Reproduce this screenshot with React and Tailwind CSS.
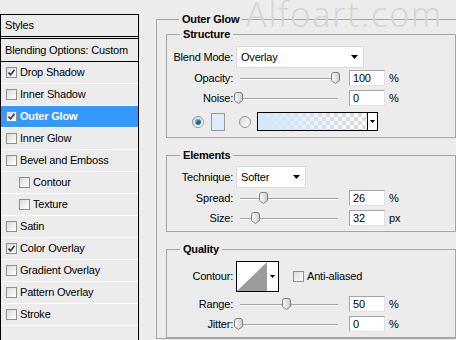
import React from "react";

const styles = [
  { label: "Drop Shadow", checked: true },
  { label: "Inner Shadow" },
  { label: "Outer Glow", checked: true, active: true },
  { label: "Inner Glow" },
  { label: "Bevel and Emboss" },
  { label: "Contour", indent: true },
  { label: "Texture", indent: true },
  { label: "Satin" },
  { label: "Color Overlay", checked: true },
  { label: "Gradient Overlay" },
  { label: "Pattern Overlay" },
  { label: "Stroke" },
];

function Checkbox({ checked }) {
  return (
    <span className="flex h-[11px] w-[11px] shrink-0 items-center justify-center border border-[#8e8f8f] bg-linear-to-br from-[#dcdcd7] to-white">
      {checked && (
        <svg width="7" height="7" viewBox="0 0 7 7">
          <path d="M0.5 3.5 L2.6 5.8 L6.5 0.8" fill="none" stroke="#2b3d73" strokeWidth="1.6" />
        </svg>
      )}
    </span>
  );
}

function Arrow() {
  return (
    <svg width="7" height="4" viewBox="0 0 7 4">
      <path d="M0 0 H7 L3.5 4 Z" fill="#000" />
    </svg>
  );
}

function Thumb() {
  return (
    <svg width="9" height="12" viewBox="0 0 9 12">
      <defs>
        <linearGradient id="tg" x1="0" y1="0" x2="1" y2="0">
          <stop offset="0" stopColor="#ffffff" />
          <stop offset="1" stopColor="#c9c9c9" />
        </linearGradient>
      </defs>
      <path d="M0.5 3 Q0.5 0.5 3 0.5 H6 Q8.5 0.5 8.5 3 V8.5 L4.5 11.5 L0.5 8.5 Z" fill="url(#tg)" stroke="#7d7d7d" />
    </svg>
  );
}

function Slider({ at }) {
  return (
    <div className="relative ml-[3px] h-full w-[113px]">
      <div className="absolute left-[4px] top-[8px] h-[2px] w-[98px] border-t border-[#a3a3a3] bg-white" />
      <div className="absolute top-[2px]" style={{ left: at - 236 - 7 }}>
        <Thumb />
      </div>
    </div>
  );
}

function NumberRow({ label, at, value, unit, className = "" }) {
  return (
    <div className={`flex h-[16px] items-center ${className}`}>
      <span className="w-[66px] text-right">{label}</span>
      <Slider at={at} />
      <div className="h-[16px] w-[36px] border border-t-[#a5a5a5] border-l-[#a5a5a5] border-r-[#e2e2e2] border-b-[#e2e2e2] bg-white pl-[3px] leading-[14px]">
        {value}
      </div>
      <span className="ml-[4px]">{unit}</span>
    </div>
  );
}

function Select({ value, width }) {
  return (
    <div className={`ml-[3px] flex h-[22px] items-center justify-between border border-[#dadada] bg-white pl-[4px] pr-[5px] ${width}`}>
      <span>{value}</span>
      <Arrow />
    </div>
  );
}

function Group({ title, className = "", children }) {
  return (
    <fieldset className={`w-[290px] border border-[#a6a6a6] ${className}`}>
      <legend className="ml-[13px] px-[3px] font-bold leading-[14px]">{title}</legend>
      {children}
    </fieldset>
  );
}

function Radio({ on }) {
  return (
    <span className="flex h-[12px] w-[12px] shrink-0 items-center justify-center rounded-full border border-[#8f9aa5] bg-linear-to-br from-[#d5d9de] to-white">
      {on && <span className="h-[6px] w-[6px] rounded-full bg-[#1a6a9c] shadow-[inset_1px_1px_1px_#7fc0e6]" />}
    </span>
  );
}

export default function App() {
  return (
    <div className="relative flex h-[340px] w-[456px] items-start overflow-hidden bg-[#ececec] font-['Liberation_Sans',Arial,sans-serif] text-[11px] tracking-[-0.2px] text-black">
      {/* Styles list */}
      <div className="mt-[14px] h-[340px] w-[139px] shrink-0 border border-black">
        <div className="flex h-[22px] items-center border-b border-black pl-[4px]">Styles</div>
        <div className="mt-[1px] flex h-[24px] items-center border-y border-black pl-[4px]">
          Blending Options: Custom
        </div>
        {styles.map((s) => (
          <div
            key={s.label}
            className={`flex h-[22px] items-center border-b border-white ${s.indent ? "pl-[18px]" : "pl-[5px]"} ${
              s.active ? "bg-[#3399ff] font-bold text-white" : ""
            }`}
          >
            <Checkbox checked={s.checked} />
            <span className="ml-[3px]">{s.label}</span>
          </div>
        ))}
      </div>

      {/* Outer Glow panel */}
      <fieldset className="ml-[17px] mt-[12px] w-[320px] shrink-0 border border-[#a6a6a6] pl-[9px]">
        <legend className="ml-[13px] px-[3px] font-bold leading-[14px]">Outer Glow</legend>

        <Group title="Structure" className="mt-[1px] pb-[6px]">
          <div className="flex flex-col pt-[5px]">
            <div className="flex h-[22px] items-center">
              <span className="w-[66px] text-right">Blend Mode:</span>
              <Select value="Overlay" width="w-[128px]" />
            </div>
            <NumberRow label="Opacity:" at={338} value="100" unit="%" className="mt-[2px]" />
            <NumberRow label="Noise:" at={241} value="0" unit="%" className="mt-[4px]" />
            <div className="mt-[6px] flex h-[19px] items-center pl-[25px]">
              <Radio on />
              <span className="ml-[7px] h-[18px] w-[14px] border border-[#9a9a9a] bg-[#dcecfb]" />
              <span className="ml-[14px]">
                <Radio />
              </span>
              <div className="ml-[6px] flex h-[19px] w-[121px] border border-black">
                <div className="flex-1 bg-[image:repeating-conic-gradient(#dadada_0%_25%,#ffffff_0%_50%)] bg-[length:8px_8px]">
                  <div className="h-full w-full bg-linear-to-r from-[#d4e8fb] to-transparent" />
                </div>
                <div className="flex w-[10px] items-center justify-center border-l border-black bg-white">
                  <svg width="5" height="3" viewBox="0 0 5 3">
                    <path d="M0 0 H5 L2.5 3 Z" fill="#000" />
                  </svg>
                </div>
              </div>
            </div>
          </div>
        </Group>

        <Group title="Elements" className="mt-[10px] pb-[5px]">
          <div className="flex flex-col pt-[4px]">
            <div className="flex h-[22px] items-center">
              <span className="w-[66px] text-right">Technique:</span>
              <Select value="Softer" width="w-[70px]" />
            </div>
            <NumberRow label="Spread:" at={266} value="26" unit="%" className="mt-[2px]" />
            <NumberRow label="Size:" at={258} value="32" unit="px" className="mt-[4px]" />
          </div>
        </Group>

        <Group title="Quality" className="mt-[10px] pb-[5px]">
          <div className="flex flex-col pt-[5px]">
            <div className="flex h-[31px] items-center">
              <span className="w-[66px] text-right">Contour:</span>
              <svg className="ml-[3px]" width="43" height="31" viewBox="0 0 43 31">
                <rect x="0.5" y="0.5" width="42" height="30" fill="#fff" stroke="#000" />
                <path d="M1 30 L31 1 V30 Z" fill="#9c9c9c" />
                <path d="M34 14 H39 L36.5 17 Z" fill="#000" />
              </svg>
              <span className="ml-[14px]">
                <Checkbox />
              </span>
              <span className="ml-[3px]">Anti-aliased</span>
            </div>
            <NumberRow label="Range:" at={289} value="50" unit="%" className="mt-[4px]" />
            <NumberRow label="Jitter:" at={241} value="0" unit="%" className="mt-[4px]" />
          </div>
        </Group>
      </fieldset>

      {/* watermark */}
      <div className="pointer-events-none absolute left-[246px] top-0 font-['Open_Sans',sans-serif] text-[34px] font-light leading-[40px] tracking-[2px] text-[#d4d4d4] -mt-[6px]">
        Alfoart.com
      </div>
    </div>
  );
}
